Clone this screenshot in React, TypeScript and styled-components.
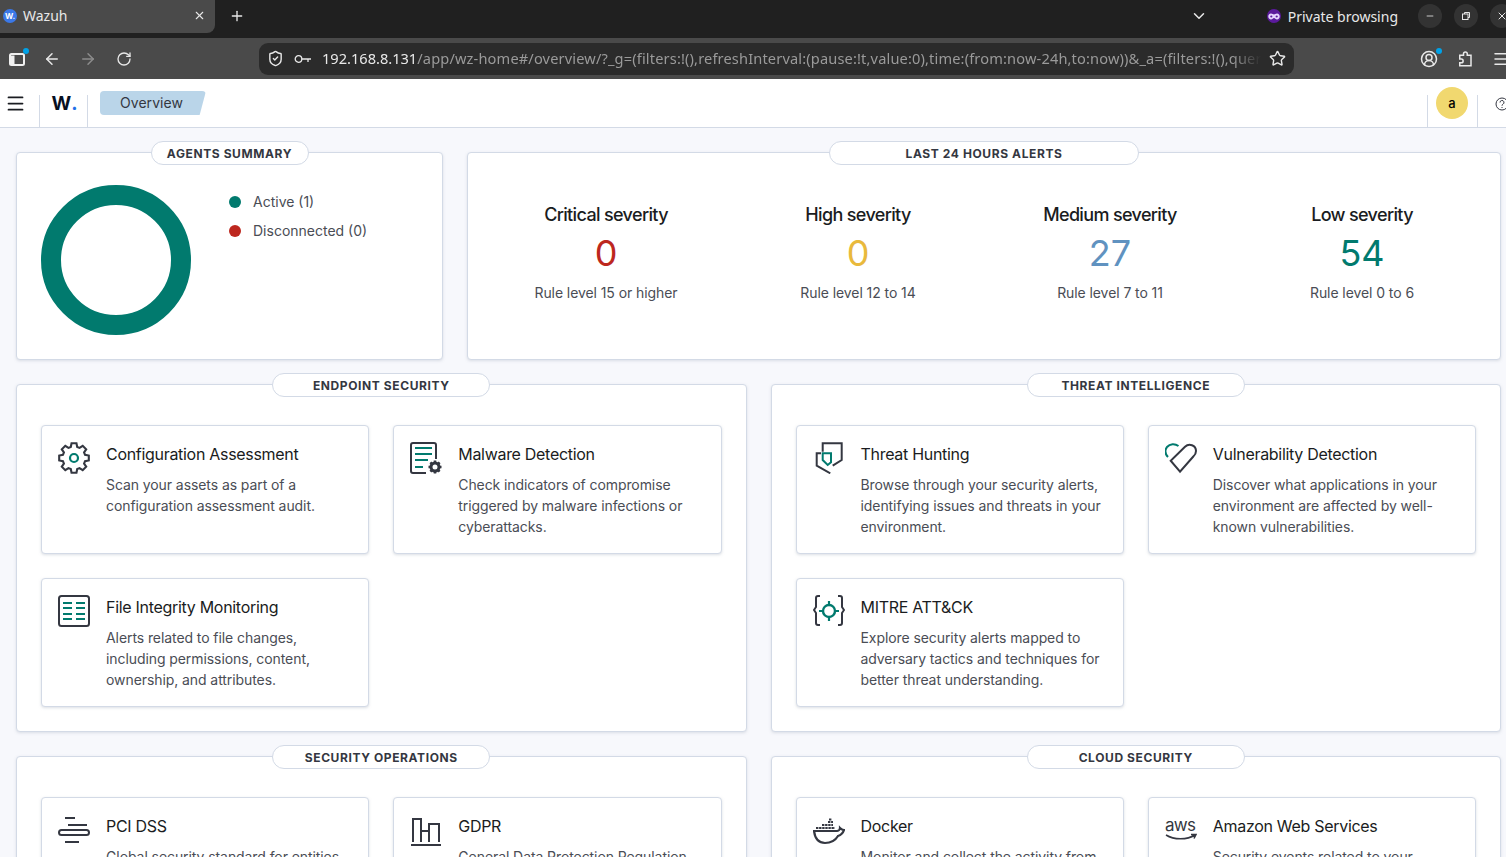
import React from 'react';
import styled, { createGlobalStyle } from 'styled-components';
import { ArrowLeft, ArrowRight, ChevronDown, CircleUserRound, Menu, Minus, Plus, RotateCw, ShieldCheck, Star, X } from 'lucide-react';

const GlobalStyle = createGlobalStyle`
    html, body {
        margin: 0;
        height: 100%;
        overflow: hidden;
        background: #f7f8fc;
        font-family: Inter, "Liberation Sans", sans-serif;
    }
    * {
        box-sizing: border-box;
    }
`;

const TEAL = '#017a6e';
const DARK = '#343741';

const Window = styled.div`
    width: 1506px;
    height: 857px;
    overflow: hidden;
    display: flex;
    flex-direction: column;
`;

const TabBar = styled.div`
    height: 38px;
    flex: none;
    display: flex;
    background: #202020;
    color: #e8e8e8;
    font-family: "Noto Sans", sans-serif;
`;

const Tab = styled.div`
    width: 215px;
    height: 33px;
    background: #4a4a4a;
    border-radius: 0 0 8px 0;
    display: flex;
    align-items: center;
    padding: 0 9px 2px 3px;
    font-size: 14px;
`;

const Favicon = styled.span`
    width: 14px;
    height: 14px;
    border-radius: 50%;
    background: #3b78e7;
    color: #fff;
    font: 700 8px Inter, sans-serif;
    display: flex;
    align-items: center;
    justify-content: center;
    margin-right: 6px;
`;

const TabTitle = styled.span`
    flex: 1;
`;

const NewTab = styled.span`
    width: 44px;
    height: 33px;
    padding-bottom: 1px;
    display: flex;
    align-items: center;
    justify-content: center;
`;

const TabBarRight = styled.div`
    margin-left: auto;
    height: 33px;
    padding-bottom: 1px;
    display: flex;
    align-items: center;
    margin-right: -20px;
`;

const TabList = styled.span`
    display: flex;
    margin-right: 59px;
`;

const PrivateLabel = styled.span`
    display: flex;
    align-items: center;
    gap: 7px;
    font-size: 14px;
    margin-right: 20px;
`;

const PrivateBadge = styled.span`
    width: 14px;
    height: 14px;
    border-radius: 50%;
    background: #5b1a9c;
    display: flex;
    align-items: center;
    justify-content: center;
`;

const WindowBtn = styled.span`
    width: 24px;
    height: 24px;
    border-radius: 50%;
    background: #333;
    display: flex;
    align-items: center;
    justify-content: center;
    margin-right: 12px;
`;

const Toolbar = styled.div`
    height: 41px;
    flex: none;
    background: #4a4a4a;
    display: flex;
    align-items: center;
    color: #e8e8e8;
    position: relative;
`;

const ToolBtn = styled.span<{ $w: number; $dim?: boolean }>`
    width: ${props => props.$w}px;
    height: 32px;
    flex: none;
    display: flex;
    align-items: center;
    justify-content: center;
    position: relative;
    color: ${props => props.$dim ? '#8c8c8c' : '#e8e8e8'};
`;

const Dot = styled.span`
    position: absolute;
    width: 6px;
    height: 6px;
    border-radius: 50%;
    background: #00a2e8;
    top: 5px;
    right: 5px;
`;

const UrlBar = styled.div`
    width: 1035px;
    height: 32px;
    flex: none;
    margin-left: 117px;
    border-radius: 9px;
    background: #2b2b2b;
    display: flex;
    align-items: center;
    padding: 0 8px;
    font-family: "Noto Sans", sans-serif;
    font-size: 14.6px;
`;

const UrlText = styled.div`
    flex: 1;
    margin-left: 10px;
    padding-bottom: 2px;
    letter-spacing: 0.15px;
    white-space: nowrap;
    overflow: hidden;
    color: #9a9a9a;
    -webkit-mask-image: linear-gradient(to right, #000 97%, transparent 100%);
    mask-image: linear-gradient(to right, #000 97%, transparent 100%);
`;

const UrlHost = styled.span`
    color: #e8e8e8;
    letter-spacing: 0;
`;

const ToolbarRight = styled.div`
    display: flex;
    align-items: center;
    margin-left: 117px;
`;

const AppHeader = styled.header`
    height: 49px;
    flex: none;
    background: #fff;
    border-bottom: 1px solid #d3dae6;
    display: flex;
`;

const MenuBtn = styled.div`
    width: 39px;
    display: flex;
    align-items: center;
    padding-left: 5px;
    color: #1a1c21;
`;

const LogoCell = styled.div`
    width: 49px;
    margin-top: 16px;
    padding-left: 2px;
    border-left: 1px solid #d3dae6;
    border-right: 1px solid #d3dae6;
    display: flex;
    justify-content: center;
    font-size: 19px;
    font-weight: 700;
    color: #07101f;
    line-height: 17px;
`;

const LogoDot = styled.span`
    color: #1f6fe8;
`;

const Crumb = styled.div`
    width: 106px;
    height: 24px;
    margin: 12px 0 0 12px;
    background: #bad5e9;
    border-radius: 4px;
    clip-path: polygon(0 0, 100% 0, 94% 100%, 0 100%);
    color: #343741;
    font-size: 14px;
    letter-spacing: 0.05px;
    line-height: 24px;
    padding-left: 20px;
`;

const HeaderRight = styled.div`
    margin-left: auto;
    display: flex;
    width: 79px;
    margin-top: 16px;
    flex: none;
    border-left: 1px solid #d3dae6;
`;

const AvatarCell = styled.div`
    width: 50px;
    border-right: 1px solid #d3dae6;
    flex: none;
    position: relative;
`;

const Avatar = styled.div`
    position: absolute;
    top: -8px;
    left: 8px;
    width: 32px;
    height: 32px;
    border-radius: 50%;
    background: #f1d86f;
    color: #000;
    font-size: 13px;
    font-weight: 500;
    display: flex;
    align-items: center;
    justify-content: center;
`;

const HelpCell = styled.div`
    padding-left: 17px;
    color: #343741;
    height: 14px;
`;

const Page = styled.main`
    flex: 1;
    min-height: 0;
    padding: 24px 5px 0 16px;
    display: flex;
    flex-direction: column;
    gap: 24px;
`;

const Row = styled.div<{ $columns: string }>`
    display: grid;
    grid-template-columns: ${props => props.$columns};
    gap: 24px;
    flex: none;
`;

const PanelBox = styled.section`
    position: relative;
    background: #fff;
    border: 1px solid #d3dae6;
    border-radius: 4px;
    box-shadow: 0 1px 3px rgba(152, 162, 179, 0.3);
`;

const PanelPill = styled.div<{ $width: number }>`
    position: absolute;
    top: -12px;
    left: 50%;
    transform: translateX(-50%);
    width: ${props => props.$width}px;
    height: 24px;
    border: 1px solid #d3dae6;
    border-radius: 12px;
    background: #fff;
    color: #343741;
    font-size: 12px;
    font-weight: 700;
    letter-spacing: 0.6px;
    line-height: 24px;
    text-align: center;
    white-space: nowrap;
`;

const AgentsBody = styled.div`
    height: 206px;
    padding: 32px 24px;
    display: flex;
    gap: 38px;
    align-items: flex-start;
`;

const Legend = styled.ul`
    list-style: none;
    margin: 6px 0 0;
    padding: 0;
    display: flex;
    flex-direction: column;
    gap: 8px;
`;

const LegendItem = styled.li`
    display: flex;
    align-items: center;
    gap: 12px;
    font-size: 14px;
    line-height: 21px;
    color: #4a4d55;
`;

const LegendDot = styled.span<{ $color: string }>`
    width: 12px;
    height: 12px;
    border-radius: 50%;
    background: ${props => props.$color};
`;

const AlertsBody = styled.div`
    height: 206px;
    padding: 50px 12px 0;
    display: grid;
    grid-template-columns: repeat(4, 252px);
`;

const Stat = styled.div`
    display: flex;
    flex-direction: column;
    align-items: center;
`;

const StatTitle = styled.div`
    font-size: 18px;
    font-weight: 500;
    line-height: 24px;
    color: #1a1c21;
    letter-spacing: -0.65px;
`;

const StatValue = styled.div<{ $color: string }>`
    font-size: 36px;
    line-height: 44px;
    margin-top: 4px;
    color: ${props => props.$color};
`;

const StatNote = styled.div`
    font-size: 14px;
    line-height: 21px;
    margin-top: 7px;
    letter-spacing: -0.08px;
    color: #4a4d55;
`;

const CardsGrid = styled.div`
    padding: 40px 24px 24px;
    display: grid;
    grid-template-columns: 1fr 1fr;
    gap: 24px;
`;

const Card = styled.article`
    display: flex;
    gap: 16px;
    padding: 16px;
    background: #fff;
    border: 1px solid #d3dae6;
    border-radius: 4px;
    box-shadow: 0 1px 3px rgba(152, 162, 179, 0.35);
`;

const CardIcon = styled.div`
    width: 32px;
    height: 32px;
    flex: none;
`;

const CardTitle = styled.h3`
    margin: 0 0 8px;
    font-size: 16px;
    font-weight: 400;
    line-height: 24px;
    letter-spacing: -0.3px;
    color: #1a1c21;
`;

const CardText = styled.p`
    margin: 0;
    font-size: 14px;
    line-height: 21px;
    letter-spacing: -0.08px;
    color: #4a4d55;
`;

const IconSvg = styled.svg`
    display: block;
    width: 32px;
    height: 32px;
    fill: none;
    stroke: ${DARK};
    stroke-width: 2;
`;

const gearPath = (() => {
    const cx = 16, cy = 16, teeth = 8;
    const pts: string[] = [];
    for (let i = 0; i < teeth; i++) {
        const a = (i / teeth) * Math.PI * 2 - Math.PI / 2;
        const step = Math.PI / teeth;
        [[11.5, -step * 0.72], [15, -step * 0.42], [15, step * 0.42], [11.5, step * 0.72]].forEach(([r, d]) => {
            pts.push(`${(cx + r * Math.cos(a + d)).toFixed(2)} ${(cy + r * Math.sin(a + d)).toFixed(2)}`);
        });
    }
    return `M${pts.join('L')}Z`;
})();

const ConfigIcon = () => (
    <IconSvg viewBox="0 0 32 32">
        <path d={gearPath} strokeLinejoin="miter" strokeWidth="2.1" />
        <circle cx="16" cy="16" r="4" stroke={TEAL} strokeWidth="2.2" />
    </IconSvg>
);

const MalwareIcon = () => (
    <IconSvg viewBox="0 0 32 32">
        <path d="M16 31H3a2 2 0 0 1-2-2V3a2 2 0 0 1 2-2h21a2 2 0 0 1 2 2v14" />
        <path d="M5 6h17M5 12h17M5 18h13M5 25h8" stroke={TEAL} />
        <circle cx="25" cy="25" r="4" strokeWidth="3" />
        <path d="M25 18.500v3M25 28.500v3M18.500 25h3M28.500 25h3M20.400 20.400l2.200 2.200M27.400 27.400l2.200 2.200M20.400 29.600l2.200-2.200M27.400 22.600l2.200-2.200" strokeWidth="2.600" />
    </IconSvg>
);

const FimIcon = () => (
    <IconSvg viewBox="0 0 32 32">
        <rect x="1" y="1" width="30" height="30" rx="2.500" />
        <path d="M5 8h9M18 8h9M5 13h9M18 13h9M5 19h9M18 19h9M5 24h9M18 24h9" stroke={TEAL} />
    </IconSvg>
);

const ThreatIcon = () => (
    <IconSvg viewBox="0 0 32 32">
        <path d="M9.700 9.700V1.300h19V18l-9 5.700" />
        <path d="M8 11.300H3.700v12.400l13.600 7.600" />
        <path d="M9.700 11.300H18v9l-3.300 2.700-5-5z" stroke={TEAL} strokeWidth="2" />
    </IconSvg>
);

const VulnerabilityIcon = () => (
    <IconSvg viewBox="0 0 32 32">
        <path d="M15 29.700 5.700 18.700 20 4.700C24 1 31 3 31 9c0 2-1 4-2.700 5.500Z" />
        <path d="M3 15C0 12 0 8 2 5c3-3.500 8-3.500 11.500-1" stroke={TEAL} />
    </IconSvg>
);

const MitreIcon = () => (
    <IconSvg viewBox="0 0 32 32">
        <path d="M7 1H5a2 2 0 0 0-2 2v9l-2 3 2 3v10a2 2 0 0 0 2 2h2" />
        <path d="M25 1h2a2 2 0 0 1 2 2v9l2 3-2 3v10a2 2 0 0 1-2 2h-2" />
        <circle cx="16" cy="16" r="6" stroke={TEAL} strokeWidth="2.400" />
        <path d="M16 6v4M16 22v4M6 16h4M22 16h4" stroke={TEAL} strokeWidth="2.200" />
    </IconSvg>
);

const PciIcon = () => (
    <IconSvg viewBox="0 0 32 32">
        <path d="M7 4h10M10 11h19M7 28h14" />
        <rect x="1" y="16" width="30" height="5" rx="2.500" />
    </IconSvg>
);

const GdprIcon = () => (
    <IconSvg viewBox="0 0 32 32">
        <path d="M1 31h30M3 28V5h8v23M11 17h8M19 28V10h10v18M19 10v7" />
    </IconSvg>
);

const DockerIcon = () => (
    <IconSvg viewBox="0 0 32 32">
        <path d="M1 17h23c1 0 3-1 3-3 1 1 2 2 4 2-1 3-3 5-6 6-3 5-8 7-13 7-6 0-10-4-11-12Z" strokeWidth="2.200" />
        <path d="M3 14h19M9 11h11M15 8h5M16 5.500h3" strokeWidth="2" strokeDasharray="2.400 .7" />
    </IconSvg>
);

const AwsText = styled.text`
    font-family: Inter, "Liberation Sans", sans-serif;
    font-size: 17px;
    fill: ${DARK};
    stroke: none;
`;

const AwsIcon = () => (
    <IconSvg viewBox="0 0 32 32">
        <AwsText x="0" y="17" textLength="31">aws</AwsText>
        <path d="M1 21c8 5 21 5 29 0M26 20.500l5 0-2 4" strokeWidth="1.500" />
    </IconSvg>
);

const Panel: React.FC<{ label: string; pill: number; children: React.ReactNode }> = ({ label, pill, children }) => (
    <PanelBox>
        <PanelPill $width={pill}>{label}</PanelPill>
        {children}
    </PanelBox>
);

type CardData = { icon: React.ReactNode; title: string; text: string };

const Cards: React.FC<{ items: CardData[] }> = ({ items }) => (
    <CardsGrid>
        {items.map(item => (
            <Card key={item.title}>
                <CardIcon>{item.icon}</CardIcon>
                <div>
                    <CardTitle>{item.title}</CardTitle>
                    <CardText>{item.text}</CardText>
                </div>
            </Card>
        ))}
    </CardsGrid>
);

const stats = [
    { title: 'Critical severity', value: '0', color: '#bd271e', note: 'Rule level 15 or higher' },
    { title: 'High severity', value: '0', color: '#e9b93c', note: 'Rule level 12 to 14' },
    { title: 'Medium severity', value: '27', color: '#6092c0', note: 'Rule level 7 to 11' },
    { title: 'Low severity', value: '54', color: TEAL, note: 'Rule level 0 to 6' },
];

const endpoint: CardData[] = [
    { icon: <ConfigIcon />, title: 'Configuration Assessment', text: 'Scan your assets as part of a configuration assessment audit.' },
    { icon: <MalwareIcon />, title: 'Malware Detection', text: 'Check indicators of compromise triggered by malware infections or cyberattacks.' },
    { icon: <FimIcon />, title: 'File Integrity Monitoring', text: 'Alerts related to file changes, including permissions, content, ownership, and attributes.' },
];

const threat: CardData[] = [
    { icon: <ThreatIcon />, title: 'Threat Hunting', text: 'Browse through your security alerts, identifying issues and threats in your environment.' },
    { icon: <VulnerabilityIcon />, title: 'Vulnerability Detection', text: 'Discover what applications in your environment are affected by well-known vulnerabilities.' },
    { icon: <MitreIcon />, title: 'MITRE ATT&CK', text: 'Explore security alerts mapped to adversary tactics and techniques for better threat understanding.' },
];

const operations: CardData[] = [
    { icon: <PciIcon />, title: 'PCI DSS', text: 'Global security standard for entities that process, store, or transmit payment cardholder data.' },
    { icon: <GdprIcon />, title: 'GDPR', text: 'General Data Protection Regulation (GDPR) sets guidelines for processing of personal data.' },
];

const cloud: CardData[] = [
    { icon: <DockerIcon />, title: 'Docker', text: 'Monitor and collect the activity from Docker containers such as creation, running, starting, stopping or pausing events.' },
    { icon: <AwsIcon />, title: 'Amazon Web Services', text: 'Security events related to your Amazon AWS services, collected directly via AWS API.' },
];

const App: React.FC = () => (
    <Window>
        <GlobalStyle />
        <TabBar>
            <Tab>
                <Favicon>W.</Favicon>
                <TabTitle>Wazuh</TabTitle>
                <X size={13} />
            </Tab>
            <NewTab><Plus size={16} /></NewTab>
            <TabBarRight>
                <TabList><ChevronDown size={18} /></TabList>
                <PrivateLabel>
                    <PrivateBadge>
                        <svg width="12" height="7" viewBox="0 0 12 7">
                            <path d="M3 0.500c1.300 0 2.300.8 3 1 .7-.2 1.700-1 3-1 1.700 0 2.700 1.400 2.700 3S10.500 6.500 9 6.500c-1.500 0-2-1.500-3-1.500S4.500 6.500 3 6.500C1.500 6.500.3 5.100.3 3.500S1.300.5 3 .5Z" fill="#e6d4ff" />
                            <circle cx="3.300" cy="3.500" r="1.100" fill="#5b1a9c" />
                            <circle cx="8.700" cy="3.500" r="1.100" fill="#5b1a9c" />
                        </svg>
                    </PrivateBadge>
                    Private browsing
                </PrivateLabel>
                <WindowBtn><Minus size={10} /></WindowBtn>
                <WindowBtn>
                    <svg width="10" height="10" viewBox="0 0 10 10" fill="none" stroke="#e8e8e8" strokeWidth="1">
                        <rect x="1.500" y="3" width="5.500" height="5.500" />
                        <path d="M3.500 3V1.500H8.500V6.500H7" />
                    </svg>
                </WindowBtn>
                <WindowBtn><X size={12} /></WindowBtn>
            </TabBarRight>
        </TabBar>
        <Toolbar>
            <ToolBtn $w={34}>
                <svg width="18" height="16" viewBox="0 0 18 16" fill="none" stroke="#f0f0f0" strokeWidth="2">
                    <rect x="2" y="3" width="14" height="11" rx="1.500" />
                    <path d="M3 4.500h3.500v9H3" fill="#f0f0f0" stroke="none" />
                </svg>
                <Dot />
            </ToolBtn>
            <ToolBtn $w={36}><ArrowLeft size={18} /></ToolBtn>
            <ToolBtn $w={36} $dim><ArrowRight size={18} /></ToolBtn>
            <ToolBtn $w={36}><RotateCw size={16} /></ToolBtn>
            <UrlBar>
                <ShieldCheck size={17} />
                <svg width="18" height="10" viewBox="0 0 18 10" fill="none" stroke="#e8e8e8" strokeWidth="1.300" style={{ marginLeft: 10 }}>
                    <circle cx="4.500" cy="5" r="3.300" />
                    <path d="M8 5h9M14 5v3" />
                </svg>
                <UrlText>
                    <UrlHost>192.168.8.131</UrlHost>/app/wz-home#/overview/?_g=(filters:!(),refreshInterval:(pause:!t,value:0),time:(from:now-24h,to:now))&amp;_a=(filters:!(),query:(language:kuery))
                </UrlText>
                <Star size={17} style={{ marginLeft: 8 }} />
            </UrlBar>
            <ToolbarRight>
                <ToolBtn $w={36}><CircleUserRound size={18} /><Dot /></ToolBtn>
                <ToolBtn $w={36}>
                    <svg width="18" height="18" viewBox="0 0 24 24" fill="none" stroke="#e8e8e8" strokeWidth="2">
                        <path d="M5 7h5V5a2.500 2.500 0 0 1 5 0v2h5v14H5v-4h2a2.500 2.500 0 0 0 0-5H5z" />
                    </svg>
                </ToolBtn>
                <ToolBtn $w={36}><Menu size={18} /></ToolBtn>
            </ToolbarRight>
        </Toolbar>
        <AppHeader>
            <MenuBtn><Menu size={21} strokeWidth={2} /></MenuBtn>
            <LogoCell>W<LogoDot>.</LogoDot></LogoCell>
            <Crumb>Overview</Crumb>
            <HeaderRight>
                <AvatarCell><Avatar>a</Avatar></AvatarCell>
                <HelpCell>
                    <svg width="14" height="14" viewBox="0 0 14 14" fill="none" stroke="#343741" strokeWidth="1">
                        <circle cx="7" cy="7" r="6" />
                        <path d="M5 5.500a2 2 0 1 1 3 1.700c-.7.400-1 .8-1 1.500M7 10v1" />
                    </svg>
                </HelpCell>
            </HeaderRight>
        </AppHeader>
        <Page>
            <Row $columns="427px 1fr">
                <Panel label="AGENTS SUMMARY" pill={158}>
                    <AgentsBody>
                        <svg width="150" height="150" viewBox="0 0 150 150" style={{ flex: 'none' }}>
                            <circle cx="75" cy="75" r="65" fill="none" stroke={TEAL} strokeWidth="20" />
                        </svg>
                        <Legend>
                            <LegendItem><LegendDot $color={TEAL} />Active (1)</LegendItem>
                            <LegendItem><LegendDot $color="#bd271e" />Disconnected (0)</LegendItem>
                        </Legend>
                    </AgentsBody>
                </Panel>
                <Panel label="LAST 24 HOURS ALERTS" pill={310}>
                    <AlertsBody>
                        {stats.map(stat => (
                            <Stat key={stat.title}>
                                <StatTitle>{stat.title}</StatTitle>
                                <StatValue $color={stat.color}>{stat.value}</StatValue>
                                <StatNote>{stat.note}</StatNote>
                            </Stat>
                        ))}
                    </AlertsBody>
                </Panel>
            </Row>
            <Row $columns="1fr 1fr">
                <Panel label="ENDPOINT SECURITY" pill={218}><Cards items={endpoint} /></Panel>
                <Panel label="THREAT INTELLIGENCE" pill={218}><Cards items={threat} /></Panel>
            </Row>
            <Row $columns="1fr 1fr">
                <Panel label="SECURITY OPERATIONS" pill={218}><Cards items={operations} /></Panel>
                <Panel label="CLOUD SECURITY" pill={218}><Cards items={cloud} /></Panel>
            </Row>
        </Page>
    </Window>
);

export default App;
